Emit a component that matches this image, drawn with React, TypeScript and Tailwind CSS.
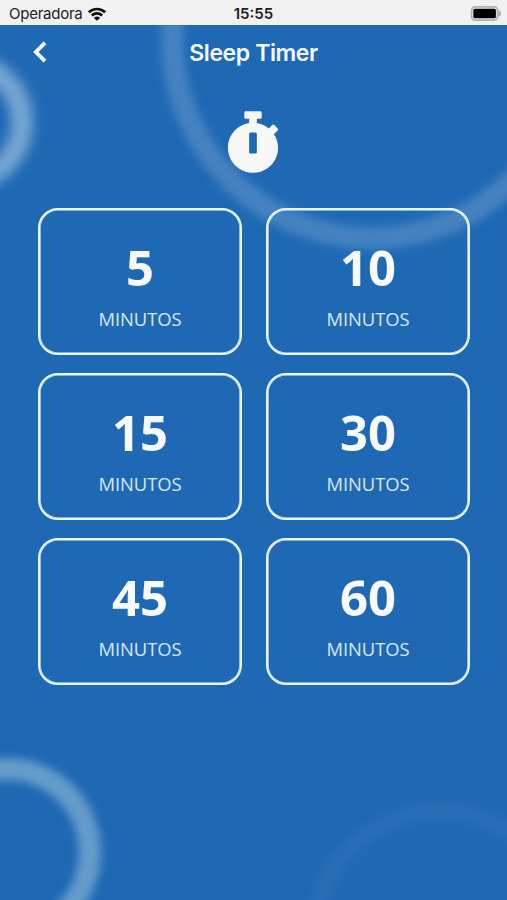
import { FaStopwatch } from "react-icons/fa";

type TimerCardProps = {
  minutes: number;
  onSelect?: (minutes: number) => void;
};

const TIMER_OPTIONS = [5, 10, 15, 30, 45, 60];

export default function App() {
  return (
    <div className="relative isolate flex h-[900px] w-[507px] flex-col overflow-hidden bg-[#1f69b4] font-['Inter',sans-serif]">
      <BackgroundRings />
      <StatusBar />
      <header className="grid h-[54px] shrink-0 grid-cols-[80px_1fr_80px] items-center text-[#f5faff]">
        <button aria-label="Voltar" className="flex h-full items-center pl-[33px]" type="button">
          <BackIcon />
        </button>
        <h1 className="pt-0.5 text-center text-[23px] leading-none font-semibold tracking-[-0.4px]">Sleep Timer</h1>
      </header>
      <main className="flex flex-col pt-8 pr-[37px] pl-[38px]">
        <div className="flex h-[62px] justify-center pr-[1.5px]">
          <FaStopwatch className="h-[62px] w-[54px] text-[#f7f7f7]" />
        </div>
        <div className="mt-[35px] grid grid-cols-[204px_204px] gap-x-6 gap-y-[18px]">
          {TIMER_OPTIONS.map((minutes) => (
            <TimerCard key={minutes} minutes={minutes} />
          ))}
        </div>
      </main>
    </div>
  );
}

function TimerCard({ minutes, onSelect }: TimerCardProps) {
  return (
    <button
      className="flex h-[147px] flex-col items-center rounded-[20px] border-2 border-[#eaf6ff] font-['Open_Sans',sans-serif] shadow-[inset_0_0_0_0.6px_#eaf6ff]"
      onClick={() => onSelect?.(minutes)}
      type="button"
    >
      <span className="mt-8 text-[49px] leading-[50px] font-bold text-[#f7f9fc]">{minutes}</span>
      <span className="mt-3.5 text-[18.4px] leading-[26px] tracking-[-0.05px] text-[#d6e8fa]">MINUTOS</span>
    </button>
  );
}

function StatusBar() {
  return (
    <div className="grid h-[25px] shrink-0 grid-cols-3 items-center bg-[#f1f1f1] text-[15px] leading-none text-[#222]">
      <div className="flex items-center gap-1.5 pt-0.5 pl-[9px]">
        <span className="tracking-[-0.25px]">Operadora</span>
        <WifiIcon />
      </div>
      <span className="pt-0.5 text-center font-semibold">15:55</span>
      <div className="flex justify-end pt-px pr-[5px]">
        <BatteryIcon />
      </div>
    </div>
  );
}

function BackgroundRings() {
  return (
    <svg
      aria-hidden="true"
      className="absolute inset-0 -z-10"
      fill="none"
      height="900"
      viewBox="0 0 507 900"
      width="507"
    >
      <defs>
        <filter height="140%" id="soft" width="140%" x="-20%" y="-20%">
          <feGaussianBlur stdDeviation="4.5" />
        </filter>
        <filter height="160%" id="softer" width="160%" x="-30%" y="-30%">
          <feGaussianBlur stdDeviation="6" />
        </filter>
      </defs>
      <g filter="url(#soft)">
        <circle cx="372" cy="38" r="200" stroke="#4482c0" strokeWidth="22" />
        <circle cx="7" cy="852" r="83" stroke="#659bcb" strokeWidth="22" />
        <circle cx="440" cy="937" r="126" stroke="#276eb5" strokeWidth="18" />
      </g>
      <circle cx="-37" cy="122" filter="url(#softer)" r="59" stroke="#76a5d1" strokeWidth="22" />
    </svg>
  );
}

function BackIcon() {
  return (
    <svg aria-hidden="true" fill="none" height="22" stroke="currentColor" strokeWidth="3.9" viewBox="0 0 14 22" width="14">
      <path d="M12 1.8 2.9 11 12 20.2" />
    </svg>
  );
}

function WifiIcon() {
  return (
    <svg aria-hidden="true" fill="none" height="14" stroke="#111" strokeWidth="2.6" viewBox="0 0 18 14" width="18">
      <path d="M.9 5.3a11.6 11.6 0 0 1 16.2 0" />
      <path d="M3.8 8.5a7.5 7.5 0 0 1 10.4 0" />
      <path d="M9 13.8 5.9 10.9a4.5 4.5 0 0 1 6.2 0Z" fill="#111" stroke="none" />
    </svg>
  );
}

function BatteryIcon() {
  return (
    <svg aria-hidden="true" height="15" viewBox="0 0 32 15" width="32">
      <path d="M28.5 4.2c1.6.6 2.5 1.8 2.5 3.3s-.9 2.7-2.5 3.3Z" fill="#a9a9a9" />
      <rect fill="#eee" height="13.2" rx="3.6" stroke="#b0b0b0" strokeWidth="1.7" width="26" x="1.6" y=".9" />
      <rect fill="#000" height="9.4" rx="1.5" width="22.5" x="3.4" y="2.8" />
    </svg>
  );
}
